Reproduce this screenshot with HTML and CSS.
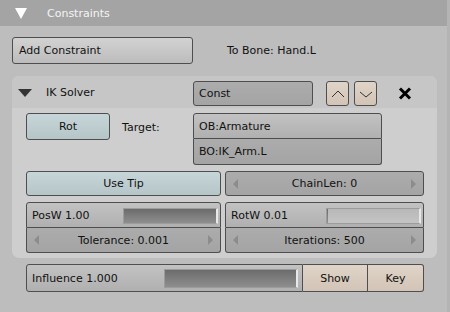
FILE: index.html
```html
<!DOCTYPE html>
<html lang="en">
    <head>
        <meta charset="UTF-8" />
        <title>Constraints</title>
        <link rel="stylesheet" href="styles.css">
    </head>
    <body>
        <div class="panel">
            <div class="panel-head">
                <svg class="tri-white" width="12" height="11" viewBox="0 0 12 11"><polygon points="0,0 12,0 6,11" fill="#fff"/></svg>
                <span class="panel-title">Constraints</span>
            </div>

            <div class="top-row">
                <div class="btn btn-grey add-btn">Add Constraint</div>
                <span class="to-bone">To Bone: Hand.L</span>
            </div>

            <div class="constraint">
                <div class="c-head">
                    <svg class="tri-dark" width="14" height="8" viewBox="0 0 14 8"><polygon points="0,0 14,0 7,8" fill="#333"/></svg>
                    <span class="c-name">IK Solver</span>
                    <div class="field field-dark const">Const</div>
                    <div class="btn btn-tan arrow-btn">
                        <svg width="14" height="10" viewBox="0 0 14 10"><polyline points="1,8 7,2 13,8" fill="none" stroke="#333" stroke-width="1"/></svg>
                    </div>
                    <div class="btn btn-tan arrow-btn down">
                        <svg width="14" height="10" viewBox="0 0 14 10"><polyline points="1,3 7,8 13,3" fill="none" stroke="#333" stroke-width="1"/></svg>
                    </div>
                    <svg class="close" width="14" height="13" viewBox="0 0 14 13"><path d="M2 1.5 L12 11.5 M12 1.5 L2 11.5" stroke="#000" stroke-width="3"/></svg>
                </div>

                <div class="c-body">
                    <div class="target-row">
                        <div class="btn btn-blue rot">Rot</div>
                        <span class="target-label">Target:</span>
                        <div class="target-fields">
                            <div class="field field-light ob">OB:Armature</div>
                            <div class="field field-dark bo">BO:IK_Arm.L</div>
                        </div>
                    </div>

                    <div class="grid">
                        <div class="btn btn-blue center">Use Tip</div>
                        <div class="field field-dark num">
                            <span class="arr-l"></span><span>ChainLen: 0</span><span class="arr-r"></span>
                        </div>

                        <div class="pair">
                            <div class="field field-light slider top">
                                <span class="s-label">PosW 1.00</span>
                                <div class="track"><div class="fill" style="width: 100%"></div></div>
                            </div>
                            <div class="field field-dark num bottom">
                                <span class="arr-l"></span><span>Tolerance: 0.001</span><span class="arr-r"></span>
                            </div>
                        </div>
                        <div class="pair">
                            <div class="field field-light slider top">
                                <span class="s-label">RotW 0.01</span>
                                <div class="track"><div class="fill" style="width: 1%"></div></div>
                            </div>
                            <div class="field field-dark num bottom">
                                <span class="arr-l"></span><span>Iterations: 500</span><span class="arr-r"></span>
                            </div>
                        </div>
                    </div>
                </div>
            </div>

            <div class="influence-row">
                <div class="field field-light slider influence">
                    <span class="s-label">Influence 1.000</span>
                    <div class="track"><div class="fill" style="width: 100%"></div></div>
                </div>
                <div class="btn btn-tan show">Show</div>
                <div class="btn btn-tan key">Key</div>
            </div>
        </div>
    </body>
</html>
```

FILE: styles.css
```css
body {
    margin: 0;
    font-family: "DejaVu Sans", sans-serif;
    font-size: 11px;
    color: #111;
}

.panel {
    width: 450px;
    height: 312px;
    background-color: #bdbdbd;
    box-sizing: border-box;
    border-right: 3px solid #b4b4b4;
}

.panel-head {
    height: 26px;
    background-color: #a4a4a4;
    display: flex;
    align-items: center;
}
.tri-white {
    margin-left: 15px;
}
.panel-title {
    margin-left: 20px;
    color: #f4f4f4;
}

/* buttons and fields */
.btn, .field {
    box-sizing: border-box;
    border: 1px solid #4e4e4e;
    border-radius: 3px;
    display: flex;
    align-items: center;
}
.btn-grey {
    background: linear-gradient(#d2d2d2, #bcbcbc);
}
.btn-blue {
    background: linear-gradient(#c6d6d8, #b6c6c8);
    justify-content: center;
}
.btn-tan {
    background: linear-gradient(#e0d4c8, #d2c4b6);
    justify-content: center;
}
.field-dark {
    background: linear-gradient(#acacac, #a4a4a4);
}
.field-light {
    background: linear-gradient(#c2c2c2, #b0b0b0);
}

.top-row {
    display: flex;
    align-items: center;
    margin: 11px 0 0 12px;
}
.add-btn {
    width: 181px;
    height: 27px;
    padding-left: 6px;
}
.to-bone {
    margin-left: 34px;
}

/* constraint block */
.constraint {
    margin: 12px 0 0 12px;
    width: 425px;
    height: 182px;
    background-color: #cecece;
    border-radius: 7px;
    overflow: hidden;
}
.c-head {
    height: 32px;
    background-color: #c6c6c6;
    display: flex;
    align-items: center;
}
.tri-dark {
    margin-left: 6px;
    margin-top: 2px;
}
.c-name {
    margin-left: 14px;
    width: 147px;
    margin-top: 1px;
}
.const {
    width: 120px;
    height: 25px;
    padding-left: 5px;
    margin-top: 3px;
}
.arrow-btn {
    width: 23px;
    height: 25px;
    margin-left: 13px;
    margin-top: 3px;
}
.arrow-btn.down {
    margin-left: 5px;
}
.close {
    margin-left: 21px;
    margin-top: 3px;
}

.c-body {
    padding: 5px 13px 0 14px;
}
.target-row {
    display: flex;
    align-items: flex-start;
}
.rot {
    width: 84px;
    height: 27px;
}
.target-label {
    margin-left: 12px;
    margin-top: 8px;
    width: 71px;
}
.target-fields {
    width: 189px;
}
.ob, .bo {
    height: 26px;
    padding-left: 5px;
}
.ob {
    border-radius: 3px 3px 0 0;
}
.bo {
    border-radius: 0 0 3px 3px;
    border-top: none;
}

.grid {
    margin-top: 6px;
    display: grid;
    grid-template-columns: 195px 199px;
    column-gap: 4px;
    row-gap: 6px;
}
.grid > .btn, .grid > .field {
    height: 25px;
}
.pair .top {
    height: 26px;
    border-radius: 3px 3px 0 0;
}
.pair .bottom {
    height: 25px;
    border-radius: 0 0 3px 3px;
    border-top: none;
}

.num {
    justify-content: space-between;
    padding: 0 7px;
}
.arr-l, .arr-r {
    width: 0;
    height: 0;
    border-top: 5px solid transparent;
    border-bottom: 5px solid transparent;
}
.arr-l {
    border-right: 5px solid #8c8c8c;
}
.arr-r {
    border-left: 5px solid #8c8c8c;
}

.slider {
    padding: 0 2px 0 5px;
}
.s-label {
    flex: 1;
}
.track {
    width: 95px;
    height: 16px;
    box-sizing: border-box;
    border: 1px solid #9c9c9c;
    border-right: 2px solid #e8e8e8;
    background: linear-gradient(#b8b8b8, #c4c4c4);
    margin-top: 1px;
}
.fill {
    height: 100%;
    background: linear-gradient(#6c6c6c, #8e8e8e);
}

.influence-row {
    display: flex;
    margin: 6px 0 0 26px;
}
.influence {
    width: 277px;
    height: 28px;
    border-radius: 3px 0 0 3px;
    padding-right: 4px;
}
.influence .track {
    width: 134px;
    height: 19px;
}
.show, .key {
    height: 28px;
    border-left: none;
    border-radius: 0;
}
.show {
    width: 65px;
}
.key {
    width: 56px;
    border-radius: 0 3px 3px 0;
}
```
